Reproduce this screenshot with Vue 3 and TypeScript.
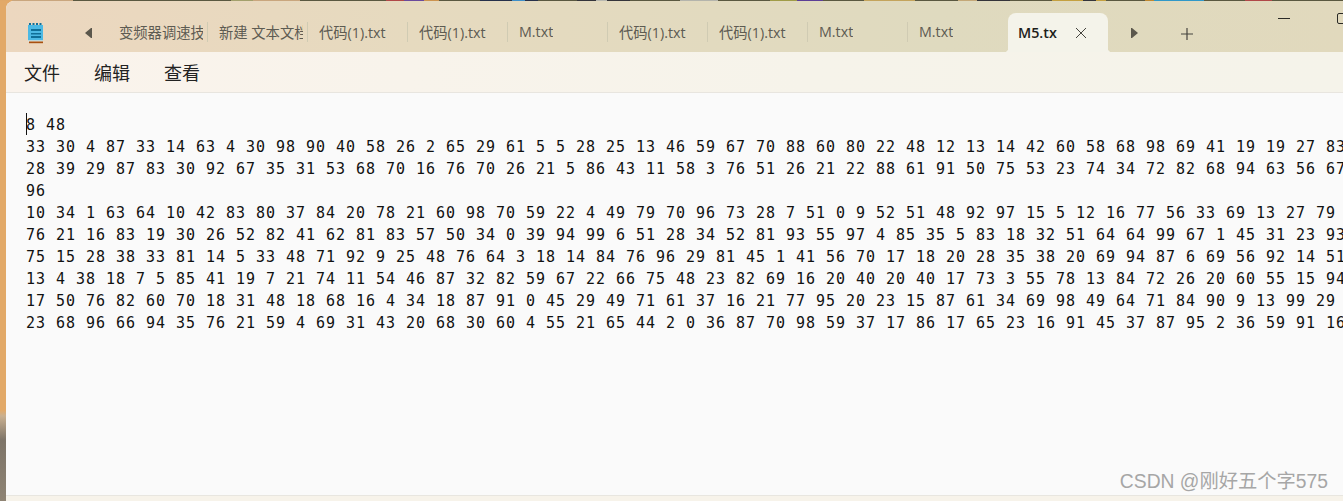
<script setup lang="ts">
interface Tab {
  title: string
  active?: boolean
  divider?: boolean
}

const tabs: Tab[] = [
  { title: "变频器调速技术", divider: true },
  { title: "新建 文本文档", divider: true },
  { title: "代码(1).txt", divider: true },
  { title: "代码(1).txt", divider: true },
  { title: "M.txt", divider: true },
  { title: "代码(1).txt", divider: true },
  { title: "代码(1).txt", divider: true },
  { title: "M.txt", divider: true },
  { title: "M.txt" },
  { title: "M5.txt", active: true },
]

const menus = ["文件", "编辑", "查看"]

const lines = [
  "8 48",
  "33 30 4 87 33 14 63 4 30 98 90 40 58 26 2 65 29 61 5 5 28 25 13 46 59 67 70 88 60 80 22 48 12 13 14 42 60 58 68 98 69 41 19 19 27 83",
  "28 39 29 87 83 30 92 67 35 31 53 68 70 16 76 70 26 21 5 86 43 11 58 3 76 51 26 21 22 88 61 91 50 75 53 23 74 34 72 82 68 94 63 56 67",
  "96",
  "10 34 1 63 64 10 42 83 80 37 84 20 78 21 60 98 70 59 22 4 49 79 70 96 73 28 7 51 0 9 52 51 48 92 97 15 5 12 16 77 56 33 69 13 27 79",
  "76 21 16 83 19 30 26 52 82 41 62 81 83 57 50 34 0 39 94 99 6 51 28 34 52 81 93 55 97 4 85 35 5 83 18 32 51 64 64 99 67 1 45 31 23 93",
  "75 15 28 38 33 81 14 5 33 48 71 92 9 25 48 76 64 3 18 14 84 76 96 29 81 45 1 41 56 70 17 18 20 28 35 38 20 69 94 87 6 69 56 92 14 51",
  "13 4 38 18 7 5 85 41 19 7 21 74 11 54 46 87 32 82 59 67 22 66 75 48 23 82 69 16 20 40 20 40 17 73 3 55 78 13 84 72 26 20 60 55 15 94",
  "17 50 76 82 60 70 18 31 48 18 68 16 4 34 18 87 91 0 45 29 49 71 61 37 16 21 77 95 20 23 15 87 61 34 69 98 49 64 71 84 90 9 13 99 29",
  "23 68 96 66 94 35 76 21 59 4 69 31 43 20 68 30 60 4 55 21 65 44 2 0 36 87 70 98 59 37 17 86 17 65 23 16 91 45 37 87 95 2 36 59 91 16",
]
</script>

<template>
  <div class="desktop">
    <div class="window">
      <header class="tabbar">
        <svg class="app-icon" width="18" height="22" viewBox="0 0 18 22">
          <rect x="2" y="3" width="15" height="15.5" fill="#4cb9e4" />
          <path d="M3 1h2v2H3zM6.500 1h2v2h-2zM10 1h2v2h-2zM13.500 1h2v2h-2z" fill="#136f98" />
          <path d="M5 7h10v2H5zM5 11h10v1.500H5zM5 14h10v2H5z" fill="#0f6f98" />
          <rect x="2" y="18.500" width="15" height="1" fill="#dfe6e4" />
          <rect x="3" y="19.500" width="14" height="1.700" fill="#a8500f" />
        </svg>
        <button class="scroll">
          <svg width="10" height="12" viewBox="0 0 10 12"><path d="M8 1v10H7L1 6l6-5z" fill="#5b574c" /></svg>
        </button>
        <div class="tabs">
          <div
            v-for="(tab, i) in tabs"
            :key="i"
            class="tab"
            :class="{ active: tab.active, divider: tab.divider }"
          >
            <span class="tab-title">{{ tab.title }}</span>
            <svg v-if="tab.active" class="close" width="12" height="12" viewBox="0 0 12 12">
              <path d="M1 1l10 10M11 1L1 11" stroke="#45443e" stroke-width="1" fill="none" />
            </svg>
          </div>
        </div>
        <button class="scroll next">
          <svg width="10" height="12" viewBox="0 0 10 12"><path d="M2 1v10h1l6-5-6-5z" fill="#5b574c" /></svg>
        </button>
        <button class="add">
          <svg width="14" height="14" viewBox="0 0 14 14"><path d="M7 1v12M1 7h12" stroke="#45443e" stroke-width="1.200" fill="none" /></svg>
        </button>
        <div class="controls">
          <span class="minimize"></span>
          <span class="maximize"></span>
        </div>
      </header>

      <nav class="menubar">
        <span v-for="m in menus" :key="m" class="menu">{{ m }}</span>
      </nav>

      <main class="editor">
        <i class="caret"></i>
        <div v-for="(line, i) in lines" :key="i" class="line">{{ line }}</div>
      </main>

      <footer class="status"></footer>
    </div>
    <div class="watermark">CSDN @刚好五个字575</div>
  </div>
</template>

<style>
html,
body {
  margin: 0;
  overflow: hidden;
}
</style>

<style scoped>
.desktop {
  position: relative;
  box-sizing: border-box;
  width: 1343px;
  height: 501px;
  padding: 1px 0 0 6px;
  overflow: hidden;
  background:
    linear-gradient(
      90deg,
      #e0a868 0 12px,
      #c9a67e 12px 73px,
      #5a5840 73px 231px,
      #a3a06c 231px 253px,
      #c9a67e 253px 300px,
      #5a5840 300px 386px,
      #b04848 386px 404px,
      #6a4a9c 404px 424px,
      #cc9450 424px 439px,
      #5a5840 439px 480px,
      #26304a 480px 512px,
      #3f8fc8 512px 525px,
      #26304a 525px 538px,
      #5a5840 538px 577px,
      #34343a 577px 596px,
      #b8b8b0 596px 607px,
      #34343a 607px 630px,
      #5a5840 630px 680px,
      #b4b4ac 680px 718px,
      #5a5840 718px 770px,
      #a09c48 770px 797px,
      #5c3f96 797px 823px,
      #5a5840 823px 864px,
      #c4a45c 864px 915px,
      #5a5840 915px 958px,
      #c4a878 958px 977px,
      #34343a 977px 1010px,
      #5a5840 1010px 1052px,
      #c4a040 1052px 1083px,
      #34343a 1083px 1096px,
      #c4a040 1096px 1106px,
      #5a5840 1106px 1145px,
      #c08830 1145px 1154px,
      #3098c8 1154px 1204px,
      #5a5840 1204px 1245px,
      #b04848 1245px 1272px,
      #5a5840 1272px 1343px
    ) top / 100% 1px no-repeat,
    linear-gradient(180deg, #e2a968 0 410px, #c9b090 416px, #7d7468 440px, #8f8474 501px);
}

.window {
  display: flex;
  flex-direction: column;
  height: 500px;
  overflow: hidden;
  border-radius: 8px 0 0 0;
  background: #fafafa;
}

.tabbar {
  display: flex;
  flex: none;
  align-items: flex-end;
  height: 51px;
  overflow: hidden;
  background: linear-gradient(90deg, #ecd7bf 0, #e6dabf 30%, #dfdabf 70%, #e1d9bd 100%);
}

.app-icon {
  flex: none;
  align-self: center;
  margin: 12px 0 0 20px;
}

button {
  display: flex;
  align-items: center;
  justify-content: center;
  padding: 0;
  border: 0;
  background: none;
}

.scroll {
  flex: none;
  align-self: center;
  width: 20px;
  height: 20px;
  margin: 13px 0 0 35px;
}

.tabs {
  display: flex;
  flex: none;
  align-self: stretch;
  margin-left: 9px;
}

.tab {
  position: relative;
  display: flex;
  flex: none;
  box-sizing: border-box;
  align-items: center;
  width: 100px;
  padding: 10px 5px 0 11px;
  color: #5d5b52;
  font: 14.300px "Open Sans", "Noto Sans CJK SC", sans-serif;
  white-space: nowrap;
}

.tab.divider::after {
  position: absolute;
  top: 21px;
  right: 0;
  width: 1px;
  height: 20px;
  background: #d0cbb3;
  content: "";
}

.tab-title {
  overflow: hidden;
}

.tab.active {
  margin-top: 12px;
  padding: 0 0 0 10px;
  border-radius: 8px 8px 0 0;
  background: #f4f3ea;
  color: #1d1d1b;
  font-weight: 600;
}

.tab.active .tab-title {
  width: 39px;
  flex: none;
}

.close {
  flex: none;
  margin-left: 18px;
}

.tab.active::before,
.tab.active::after {
  position: absolute;
  bottom: 0;
  width: 4px;
  height: 4px;
  content: "";
}

.tab.active::before {
  left: -4px;
  background: radial-gradient(circle at 0 0, transparent 4px, #f4f3ea 4.500px);
}

.tab.active::after {
  right: -4px;
  background: radial-gradient(circle at 100% 0, transparent 4px, #f4f3ea 4.500px);
}

.scroll.next {
  margin-left: 16px;
}

.add {
  flex: none;
  align-self: center;
  width: 14px;
  height: 14px;
  margin: 14px 0 0 36px;
}

.controls {
  display: flex;
  flex: none;
  align-self: flex-start;
  gap: 47px;
  margin-left: 84px;
  padding-top: 12px;
}

.minimize {
  flex: none;
  width: 12px;
  height: 1px;
  margin-top: 5px;
  background: #2a2a26;
}

.maximize {
  flex: none;
  box-sizing: border-box;
  width: 12px;
  height: 11px;
  border: 1px solid #2a2a26;
  border-radius: 2px;
}

.menubar {
  display: flex;
  flex: none;
  gap: 34px;
  align-items: center;
  height: 40px;
  padding: 0 0 0 18px;
  border-bottom: 1px solid #e8e5df;
  background: linear-gradient(90deg, #faf3ec 0, #f6f3ea 60%, #f5f3ea 100%);
}

.menu {
  color: #222;
  font: 18px "Noto Sans CJK SC", sans-serif;
}

.editor {
  position: relative;
  flex: 1;
  min-height: 0;
  padding: 21px 0 0 20px;
  overflow: hidden;
  color: #111;
  font: 15px/22px "DejaVu Sans Mono", monospace;
  letter-spacing: 0.970px;
  white-space: pre;
}

.line {
  height: 22px;
}

.caret {
  position: absolute;
  top: 20px;
  left: 20px;
  width: 1px;
  height: 22px;
  background: #111;
}

.status {
  flex: none;
  height: 5px;
  border-top: 1px solid #e8e6e0;
  background: #f7f3ea;
}

.watermark {
  position: absolute;
  right: 15px;
  bottom: 8px;
  color: #a6a6a6;
  font: 19.300px/22px "Liberation Sans", "Noto Sans CJK SC", sans-serif;
  white-space: nowrap;
}
</style>
